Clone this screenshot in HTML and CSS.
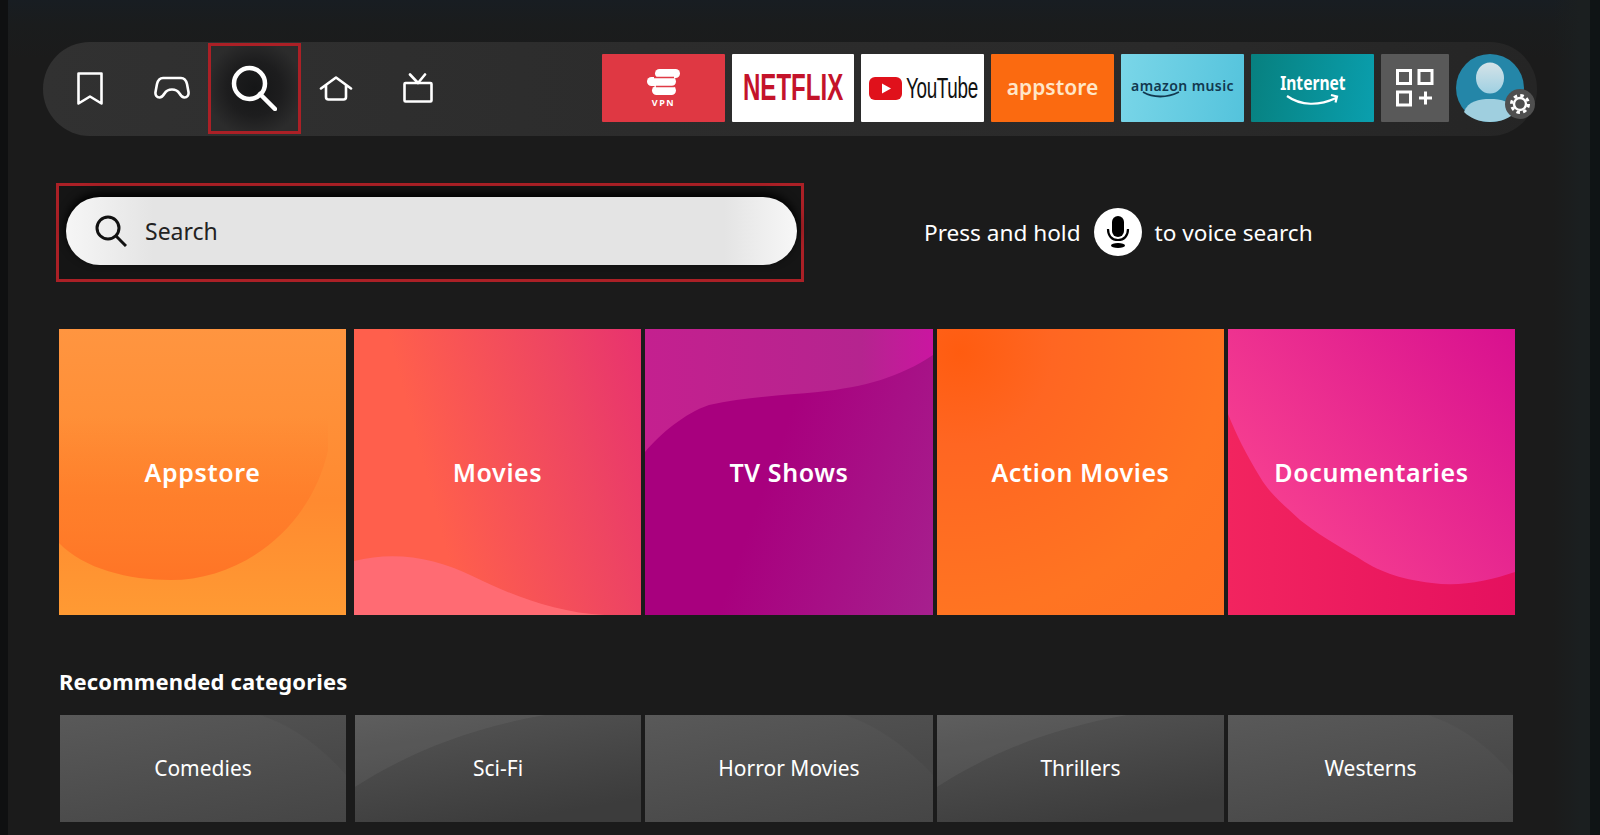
FILE: index.html
```html
<!DOCTYPE html>
<html lang="en">

<head>
    <meta charset="UTF-8">
    <meta name="viewport" content="width=device-width, initial-scale=1.0">
    <title>Search</title>
    <link rel="stylesheet" href="styles.css">
</head>

<body>
    <div class="screen">
        <div class="nav-bar">
            <div class="nav-icon">
                <svg width="28" height="35" viewBox="0 0 28 35"><path class="line" d="M2.500 2.500h23v30L14 25.500 2.500 32.500z" /></svg>
            </div>
            <div class="nav-icon">
                <svg width="36" height="24" viewBox="0 0 36 24"><path class="line" d="M9 2h18c3.500 0 5 2 6 6l1.500 8c.5 3.500-1.500 5.500-4 5.500-2.500 0-3.500-1.500-5-4-1.500-2.500-3.500-4-7.500-4s-6 1.500-7.500 4c-1.500 2.500-2.500 4-5 4s-4.500-2-4-5.500L3 8c1-4 2.500-6 6-6z" /></svg>
            </div>
            <div class="nav-icon nav-active">
                <svg width="46" height="46" viewBox="0 0 46 46"><circle class="line thick" cx="18.500" cy="18.500" r="15.500" /><path class="line thick" d="M29 29l15 15" /></svg>
            </div>
            <div class="nav-icon">
                <svg width="34" height="25" viewBox="0 0 34 25"><path class="line" d="M2 12.500L17 1.500l15 11M7 9.500V21c0 1.500 1 2.500 2.500 2.500h15c1.500 0 2.500-1 2.500-2.500V9.500" /></svg>
            </div>
            <div class="nav-icon">
                <svg width="30" height="30" viewBox="0 0 30 30"><rect class="line" x="1.500" y="10" width="27" height="18.500" rx="1" /><path class="line" d="M7 1.500l8 8.500 7-8.500" /></svg>
            </div>

            <div class="app-row">
                <div class="app app-vpn">
                    <svg width="34" height="26" viewBox="0 0 34 26">
                        <rect x="8" y="0" width="25" height="9" rx="4.500" fill="#fff" />
                        <rect x="0" y="8" width="29" height="9" rx="4.500" fill="#fff" />
                        <rect x="5" y="17" width="24" height="9" rx="4.500" fill="#fff" />
                        <path d="M7 8.500h20M9 17.500h18" stroke="#e03a45" stroke-width="1.300" />
                    </svg>
                    <span>VPN</span>
                </div>
                <div class="app app-netflix"><span>NETFLIX</span></div>
                <div class="app app-youtube">
                    <svg width="33" height="23" viewBox="0 0 33 23"><rect width="33" height="23" rx="6" fill="#e0111b" /><path d="M13 6.500l9 5-9 5z" fill="#fff" /></svg>
                    <span>YouTube</span>
                </div>
                <div class="app app-store">appstore</div>
                <div class="app app-music">
                    <span>amazon music</span>
                    <svg width="38" height="7" viewBox="0 0 38 7"><path d="M1 1c10 6 24 6 36 0" fill="none" stroke="#12384f" stroke-width="1.800" /></svg>
                </div>
                <div class="app app-internet">
                    <span>Internet</span>
                    <svg width="53" height="11" viewBox="0 0 53 11"><path d="M1 2c14 10 32 10 49 2M45 1l6 1.500-1.500 6" fill="none" stroke="#fff" stroke-width="2.200" /></svg>
                </div>
                <div class="app app-all">
                    <svg width="38" height="38" viewBox="0 0 38 38">
                        <rect class="square" x="1.500" y="1.500" width="13" height="13" />
                        <rect class="square" x="23" y="1.500" width="13" height="13" />
                        <rect class="square" x="1.500" y="23" width="13" height="13" />
                        <path class="square" d="M29.500 22.500v13M23 29h13" />
                    </svg>
                </div>
                <div class="avatar">
                    <svg width="68" height="68" viewBox="0 0 68 68">
                        <defs>
                            <linearGradient id="head" x1="0" y1="0" x2="0" y2="1">
                                <stop offset="0" stop-color="#d5e3e8" />
                                <stop offset="1" stop-color="#9fd0e2" />
                            </linearGradient>
                        </defs>
                        <circle cx="34" cy="34" r="34" fill="#2486a8" />
                        <ellipse cx="34" cy="24" rx="14" ry="15.500" fill="url(#head)" />
                        <path d="M8 58c4-11 15-13 26-13s22 2 26 13c-6 6-15 10-26 10S14 64 8 58z" fill="#9fcfdf" />
                    </svg>
                    <div class="gear">
                        <svg width="22" height="22" viewBox="0 0 22 22">
                            <circle cx="11" cy="11" r="6" fill="none" stroke="#fff" stroke-width="2.400" />
                            <circle cx="11" cy="11" r="8.500" fill="none" stroke="#fff" stroke-width="3" stroke-dasharray="3.500 3.180" />
                        </svg>
                    </div>
                </div>
            </div>
        </div>

        <div class="search-row">
            <div class="search-frame">
                <div class="search-box">
                    <svg width="32" height="32" viewBox="0 0 32 32"><circle cx="13" cy="13" r="11" fill="none" stroke="#111" stroke-width="3" /><path d="M21 21l10 10" stroke="#111" stroke-width="3" /></svg>
                    <span>Search</span>
                </div>
            </div>
            <div class="voice-hint">
                <span>Press and hold</span>
                <div class="mic">
                    <svg width="24" height="32" viewBox="0 0 24 32">
                        <rect x="6" y="0" width="12" height="21" rx="6" fill="#000" />
                        <path d="M2 13c0 7 4 11 10 11s10-4 10-11" fill="none" stroke="#000" stroke-width="2.200" />
                        <ellipse cx="12" cy="29.500" rx="7" ry="2.500" fill="#000" />
                    </svg>
                </div>
                <span>to voice search</span>
            </div>
        </div>

        <div class="tile-row">
            <div class="tile tile-appstore">
                <svg class="tile-art" viewBox="0 0 288 286" preserveAspectRatio="none">
                    <defs>
                        <linearGradient id="blob" x1="0" y1="0" x2="0" y2="1">
                            <stop offset=".35" stop-color="#ff7426" stop-opacity="0" />
                            <stop offset="1" stop-color="#ff7426" />
                        </linearGradient>
                    </defs>
                    <path d="M0 0v214c25 26 70 37 112 37 70 0 140-50 158-130V0z" fill="url(#blob)" />
                </svg>
                <span>Appstore</span>
            </div>
            <div class="tile tile-movies">
                <svg class="tile-art" viewBox="0 0 286 286" preserveAspectRatio="none">
                    <path d="M0 232c40-10 80-4 120 16 35 17 80 36 130 38H0z" fill="#ff6b73" />
                </svg>
                <span>Movies</span>
            </div>
            <div class="tile tile-shows">
                <svg class="tile-art" viewBox="0 0 288 286" preserveAspectRatio="none">
                    <defs>
                        <linearGradient id="shows" x1="0" y1="0" x2="1" y2="0">
                            <stop offset="0" stop-color="#c4208f" />
                            <stop offset=".75" stop-color="#b5248f" />
                            <stop offset="1" stop-color="#ca16a0" />
                        </linearGradient>
                    </defs>
                    <path d="M0 0H288V26C255 48 220 58 173 63 140 66 100 68 64 76 40 84 15 105 0 123z" fill="url(#shows)" />
                </svg>
                <span>TV Shows</span>
            </div>
            <div class="tile tile-action"><span>Action Movies</span></div>
            <div class="tile tile-docs">
                <svg class="tile-art" viewBox="0 0 287 286" preserveAspectRatio="none">
                    <defs>
                        <linearGradient id="docs" x1="0" y1=".7" x2="1" y2="0">
                            <stop offset="0" stop-color="#f94390" />
                            <stop offset="1" stop-color="#d8108f" />
                        </linearGradient>
                    </defs>
                    <path d="M0 0H287V243C260 252 232 258 204 254 170 250 150 242 129 228 105 214 90 205 72 191 55 175 42 165 32 148 18 125 8 105 0 85z" fill="url(#docs)" />
                </svg>
                <span>Documentaries</span>
            </div>
        </div>

        <h2 class="section-title">Recommended categories</h2>

        <div class="cat-row">
            <div class="cat">
                <svg class="tile-art" viewBox="0 0 286 107" preserveAspectRatio="none"><path d="M200 0c30 10 60 30 86 60V0z" fill="#000" opacity=".04" /></svg>
                <span>Comedies</span>
            </div>
            <div class="cat cat-dark">
                <svg class="tile-art" viewBox="0 0 286 107" preserveAspectRatio="none"><path d="M0 0h190C110 14 50 40 0 72z" fill="#fff" opacity=".05" /></svg>
                <span>Sci-Fi</span>
            </div>
            <div class="cat">
                <svg class="tile-art" viewBox="0 0 288 107" preserveAspectRatio="none"><path d="M200 0c30 10 60 30 88 60V0z" fill="#000" opacity=".04" /></svg>
                <span>Horror Movies</span>
            </div>
            <div class="cat cat-dark">
                <svg class="tile-art" viewBox="0 0 287 107" preserveAspectRatio="none"><path d="M0 0h190C110 14 50 40 0 72z" fill="#fff" opacity=".05" /></svg>
                <span>Thrillers</span>
            </div>
            <div class="cat">
                <svg class="tile-art" viewBox="0 0 285 107" preserveAspectRatio="none"><path d="M200 0c30 10 60 30 85 60V0z" fill="#000" opacity=".04" /></svg>
                <span>Westerns</span>
            </div>
        </div>
    </div>
</body>

</html>
```

FILE: styles.css
```css
/* Reset */
* {
    margin: 0;
    padding: 0;
    box-sizing: border-box;
    font-family: "Noto Sans", Arial, sans-serif;
}

html,
body {
    height: 100%;
    overflow: hidden;
    background-color: #1a1a1a;
}

.screen {
    height: 835px;
    padding-top: 42px;
    border-left: 8px solid #0f1011;
    border-right: 10px solid #0f1415;
    color: white;
    background:
        linear-gradient(to right, transparent 1545px, #1b1f20 1572px),
        linear-gradient(to bottom, #181d22 0, #1a1c1d 24px, #1b1b1b 60px);
}

/* Top bar */
.nav-bar {
    display: flex;
    align-items: center;
    width: 1494px;
    height: 94px;
    margin-left: 35px;
    padding: 0 13px 2px 6px;
    background: linear-gradient(to right, #313131, #2c2c2c 40%, #2a2a2a 75%, #252525);
    border-radius: 47px;
}

.nav-icon {
    width: 82px;
    display: flex;
    align-items: center;
    justify-content: center;
}

.nav-active {
    width: 93px;
    height: 91px;
    margin: 0 -5.5px;
    border: 3px solid #ab2026;
    background: radial-gradient(circle at 50% 50%, #151617 0, #1d1d1e 45%, #2c2c2c 80%);
}

.line {
    fill: none;
    stroke: white;
    stroke-width: 2.6;
    stroke-linejoin: round;
    stroke-linecap: round;
}

.thick {
    stroke-width: 4.5;
}

.app-row {
    display: flex;
    align-items: center;
    gap: 7px;
    margin-left: auto;
}

.app {
    width: 123px;
    height: 68px;
    display: flex;
    align-items: center;
    justify-content: center;
    border-radius: 1px;
    overflow: hidden;
}

.app-vpn {
    flex-direction: column;
    gap: 3px;
    background-color: #df3843;
}

.app-vpn span {
    font-size: 9px;
    font-weight: 700;
    line-height: 9px;
    letter-spacing: 1.5px;
}

.app-netflix {
    width: 122px;
    background-color: white;
}

.app-netflix span {
    font-family: "Liberation Sans", Arial, sans-serif;
    font-size: 37px;
    font-weight: 700;
    color: #c4132a;
    transform: scaleX(0.65);
}

.app-youtube {
    gap: 4px;
    background-color: white;
}

.app-youtube svg {
    margin-left: -3px;
}

.app-youtube span {
    width: 67px;
    font-family: "Liberation Sans", Arial, sans-serif;
    font-size: 29px;
    color: #111;
    white-space: nowrap;
    letter-spacing: -0.5px;
    transform: scaleX(0.65);
    transform-origin: left center;
}

.app-store {
    padding-bottom: 3px;
    background-color: #fb6a10;
    color: #ffe6c8;
    font-size: 21px;
    font-weight: 600;
}

.app-music {
    flex-direction: column;
    background: linear-gradient(100deg, #7ad6e8, #54c3dc);
    color: #12384f;
    font-size: 14px;
    font-weight: 600;
    letter-spacing: 0.4px;
    line-height: 14px;
}

.app-music svg {
    margin-right: 44px;
    margin-top: -2px;
}

.app-internet {
    flex-direction: column;
    background: linear-gradient(100deg, #07807f, #0a9fae);
    font-size: 19px;
    font-weight: 700;
    line-height: 22px;
}

.app-internet span {
    transform: scaleX(0.82);
}

.app-all {
    width: 68px;
    background-color: #595959;
}

.square {
    fill: none;
    stroke: white;
    stroke-width: 3;
}

.avatar {
    position: relative;
    width: 68px;
    height: 68px;
}

.gear {
    position: absolute;
    right: -11px;
    bottom: 3px;
    width: 30px;
    height: 30px;
    border-radius: 50%;
    background-color: #4f4f4f;
    display: flex;
    align-items: center;
    justify-content: center;
}

/* Search */
.search-row {
    display: flex;
    align-items: center;
    margin: 47px 0 0 48px;
}

.search-frame {
    width: 748px;
    height: 99px;
    padding: 11px 4px 0 7px;
    border: 3px solid #ab2026;
    background-color: #151515;
}

.search-box {
    height: 68px;
    display: flex;
    align-items: center;
    gap: 18px;
    padding-left: 29px;
    border-radius: 34px;
    background: linear-gradient(to right, #f6f6f6, #e4e4e4 12%, #e4e4e4 90%, #f7f7f7);
    box-shadow: 0 -4px 10px #000;
    color: #222;
    font-size: 23px;
}

.voice-hint {
    display: flex;
    align-items: center;
    margin: -1px 0 0 120px;
    font-size: 22.6px;
}

.mic {
    width: 48px;
    height: 48px;
    margin: 0 13px;
    border-radius: 50%;
    background-color: white;
    display: flex;
    align-items: center;
    justify-content: center;
}

/* Tiles */
.tile-row {
    display: grid;
    grid-template-columns: 291px 287px 288px 287px 287px;
    column-gap: 4px;
    height: 286px;
    margin: 47px 0 0 51px;
}

.tile-row .tile:first-child {
    margin-right: 4px;
}

.tile {
    position: relative;
    display: flex;
    align-items: center;
    justify-content: center;
    font-size: 25px;
    font-weight: 600;
    letter-spacing: 0.6px;
    overflow: hidden;
}

.tile span,
.cat span {
    position: relative;
}

.tile-art {
    position: absolute;
    top: 0;
    left: 0;
    width: 100%;
    height: 100%;
}

.tile-appstore {
    background: linear-gradient(to bottom, #ff9540, #ff8a30 60%, #ff9a33);
}

.tile-movies {
    background: linear-gradient(75deg, #ff5f4c 30%, #ee4562 75%, #e8326f);
}

.tile-shows {
    background: linear-gradient(110deg, #a8007e 45%, #a6208e);
}

.tile-action {
    background: radial-gradient(circle at 8% 8%, #ff5c10, #ff6622 25%, #ff7422 70%, #ff7024);
}

.tile-docs {
    background: linear-gradient(to right, #f2245f, #e5105f);
}

.section-title {
    height: 30px;
    margin: 51px 0 0 51px;
    font-size: 22px;
    font-weight: 700;
    letter-spacing: 0.15px;
    line-height: 30px;
}

.cat-row {
    display: grid;
    grid-template-columns: 291px 286px 288px 287px 285px;
    column-gap: 4px;
    height: 107px;
    margin: 19px 0 0 52px;
}

.cat-row .cat:first-child {
    margin-right: 5px;
}

.cat {
    position: relative;
    display: flex;
    align-items: center;
    justify-content: center;
    padding-bottom: 2px;
    font-size: 21px;
    background: linear-gradient(170deg, #595959, #454545);
    overflow: hidden;
}

.cat-dark {
    background: linear-gradient(170deg, #565656, #3c3c3c 85%);
}
```
